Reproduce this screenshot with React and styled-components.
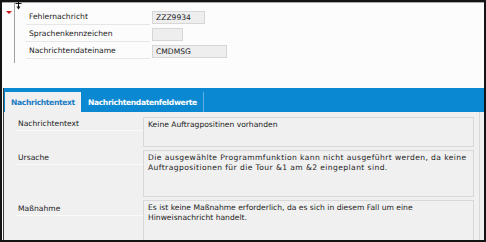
import React from "react";
import styled, { createGlobalStyle } from "styled-components";

const GlobalStyle = createGlobalStyle`
  body {
    margin: 0;
    background: #ffffff;
    font-family: "DejaVu Sans", Verdana, sans-serif;
  }
`;

const Frame = styled.div`
  width: 486px;
  height: 242px;
  box-sizing: border-box;
  border: 2px solid #141414;
  display: flex;
  flex-direction: column;
  overflow: hidden;
  position: relative;
  background: #fcfcfc;
`;

const Header = styled.div`
  height: 85px;
  flex-shrink: 0;
  border-top: 1px solid #a8a8a8;
  display: flex;
  background: #fcfcfc;
`;

const Gutter = styled.div`
  width: 12px;
  padding-top: 8px;
  display: flex;
  justify-content: center;
`;

const Triangle = styled.div`
  width: 0;
  height: 0;
  margin-left: 1px;
  border-left: 3px solid transparent;
  border-right: 3px solid transparent;
  border-top: 3px solid #d01818;
`;

const Rule = styled.div`
  width: 1px;
  height: 60px;
  background: #a0a0a0;
`;

const Form = styled.div`
  padding: 7px 0 0 11px;
  display: flex;
  flex-direction: column;
  gap: 2px;
`;

const FormRow = styled.div`
  display: flex;
  align-items: center;
  gap: 2px;
`;

const FormLabel = styled.div`
  width: 121px;
  height: 14px;
  padding-left: 3px;
  border-bottom: 1px solid #e6e6e6;
  font-size: 7.6px;
  line-height: 14px;
  color: #222;
`;

const Field = styled.div`
  width: ${(p) => p.w}px;
  height: 13px;
  box-sizing: border-box;
  background: #eeeeee;
  border: 1px solid #d6d6d6;
  padding-left: 3px;
  font-size: 7.6px;
  line-height: 12px;
  color: #222;
`;

const Cursor = styled.svg`
  position: absolute;
  left: 13px;
  top: -2px;
`;

const Lower = styled.div`
  flex: 1;
  min-height: 0;
  overflow: hidden;
  display: flex;
  flex-direction: column;
  margin-left: 1px;
  border-left: 1px solid #3a3a3a;
  background: #f0f0f0;
`;

const TabBar = styled.div`
  height: 24px;
  flex-shrink: 0;
  background: #0b88d2;
  display: flex;
  align-items: flex-end;
  padding-left: 1px;
`;

const Tab = styled.div`
  height: 20px;
  padding: 0 6px;
  display: flex;
  align-items: center;
  font-size: 7.6px;
  font-weight: bold;
  letter-spacing: -0.35px;
  color: ${(p) => (p.active ? "#1a7cc4" : "#ffffff")};
  background: ${(p) => (p.active ? "#f0f0f0" : "transparent")};
  border-right: ${(p) => (p.active ? "none" : "1px solid rgba(255,255,255,0.35)")};
  margin-left: ${(p) => (p.active ? "0" : "1px")};
`;

const Content = styled.div`
  flex: 1;
  padding: 5px 5px 0 11px;
  display: flex;
  flex-direction: column;
  gap: 3px;
  border-right: 1px solid #d8d8d8;
  margin-right: 4px;
`;

const Row = styled.div`
  display: grid;
  grid-template-columns: 128px 1fr;
  align-items: start;
  flex-shrink: 0;
`;

const RowLabel = styled.div`
  height: 13px;
  padding: ${(p) => p.pad}px 0 0 3px;
  border-bottom: 1px solid #fafafa;
  font-size: 7.6px;
  line-height: 13px;
  color: #222;
`;

const TextBox = styled.div`
  height: ${(p) => p.h}px;
  box-sizing: border-box;
  background: #f0f0f0;
  border: 1px solid #d8d8d8;
  padding: 2px 4px;
  font-size: 7.6px;
  line-height: 10px;
  letter-spacing: ${(p) => p.ls}px;
  color: #222;
`;

const fields = [
  { label: "Fehlernachricht", value: "ZZZ9934", w: 53 },
  { label: "Sprachenkennzeichen", value: "", w: 31 },
  { label: "Nachrichtendateiname", value: "CMDMSG", w: 75 },
];

const rows = [
  { label: "Nachrichtentext", h: 30, pad: 0, ls: 0, text: "Keine Auftragpositinen vorhanden" },
  {
    label: "Ursache",
    h: 47,
    pad: 1,
    ls: 0.4,
    text: "Die ausgewählte Programmfunktion kann nicht ausgeführt werden, da keine Auftragpositionen für die Tour &1 am &2 eingeplant sind.",
  },
  {
    label: "Maßnahme",
    h: 47,
    pad: 2,
    ls: 0,
    text: "Es ist keine Maßnahme erforderlich, da es sich in diesem Fall um eine Hinweisnachricht handelt.",
  },
];

export default function App() {
  return (
    <>
      <GlobalStyle />
      <Frame>
        <Header>
          <Gutter>
            <Triangle />
          </Gutter>
          <Rule />
          <Form>
            {fields.map((f) => (
              <FormRow key={f.label}>
                <FormLabel>{f.label}</FormLabel>
                <Field w={f.w}>{f.value}</Field>
              </FormRow>
            ))}
          </Form>
        </Header>
        <Cursor width="7" height="10" viewBox="0 0 7 10">
          <path d="M0.5 3.5h6" stroke="#111" strokeWidth="1" />
          <path d="M3.5 0v9" stroke="#111" strokeWidth="1" />
          <path d="M1.5 6.5l2 3 2-3z" fill="#111" />
        </Cursor>
        <Lower>
          <TabBar>
            <Tab active>Nachrichtentext</Tab>
            <Tab>Nachrichtendatenfeldwerte</Tab>
          </TabBar>
          <Content>
            {rows.map((r) => (
              <Row key={r.label}>
                <RowLabel pad={r.pad}>{r.label}</RowLabel>
                <TextBox h={r.h} ls={r.ls}>
                  {r.text}
                </TextBox>
              </Row>
            ))}
          </Content>
        </Lower>
      </Frame>
    </>
  );
}
